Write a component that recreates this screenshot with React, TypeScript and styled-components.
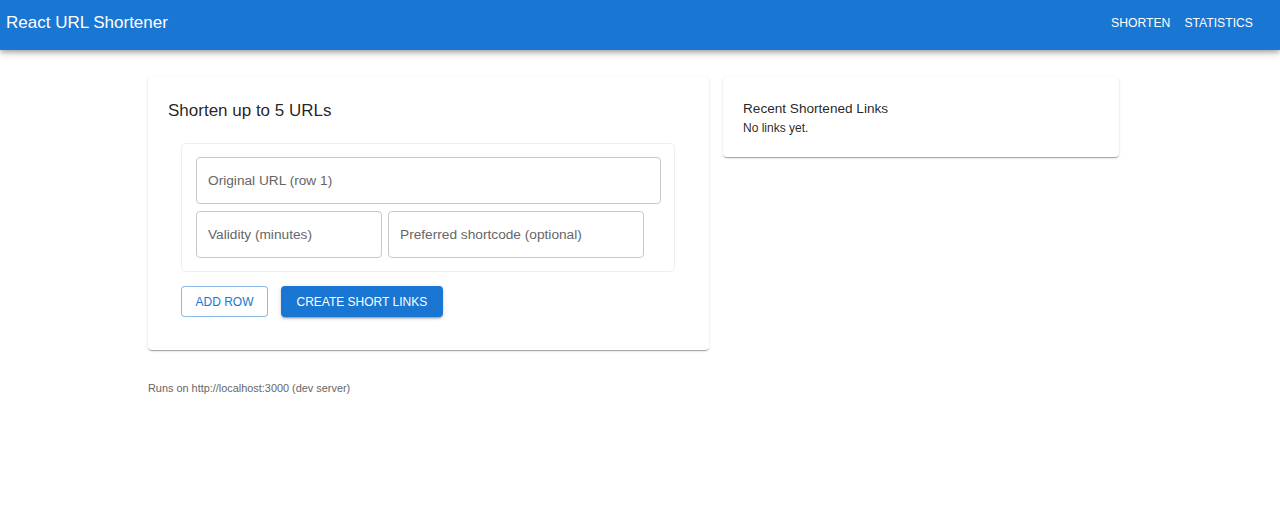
import React from "react";
import styled, { createGlobalStyle } from "styled-components";

const GlobalStyle = createGlobalStyle`
  html, body { margin: 0; padding: 0; background: #fff; }
  body { font-family: "Liberation Sans", Arial, sans-serif; color: rgba(0,0,0,0.87); }
  * { box-sizing: border-box; }
`;

const AppBar = styled.header`
  height: 50px;
  background: #1976d2;
  color: #fff;
  display: flex;
  align-items: center;
  justify-content: space-between;
  padding: 0 27px 0 6px;
  box-shadow: 0px 2px 4px -1px rgba(0,0,0,0.2), 0px 4px 5px 0px rgba(0,0,0,0.14), 0px 1px 10px 0px rgba(0,0,0,0.12);
  position: relative;
  z-index: 1;
`;

const Brand = styled.div`
  font-size: 17px;
  line-height: 20px;
  margin-top: -5px;
`;

const Nav = styled.nav`
  display: flex;
  gap: 14px;
  margin-top: -5px;
`;

const NavLink = styled.a`
  color: #fff;
  font-size: 12.2px;
  font-weight: 500;
  text-transform: uppercase;
  text-decoration: none;
  line-height: 16px;
`;

const Main = styled.main`
  padding: 27px 0 0 148px;
`;

const Columns = styled.div`
  display: grid;
  grid-template-columns: 561px 396px;
  gap: 14px;
  align-items: start;
`;

const Card = styled.section`
  background: #fff;
  border-radius: 4px;
  padding: 20px;
  box-shadow: 0px 2px 1px -1px rgba(0,0,0,0.2), 0px 1px 1px 0px rgba(0,0,0,0.14), 0px 1px 3px 0px rgba(0,0,0,0.12);
`;

const CardTitle = styled.h2`
  margin: 0;
  font-size: 17px;
  font-weight: 400;
  line-height: 28px;
`;

const FormArea = styled.div`
  padding: 18px 14px 13px 13px;
`;

const RowBox = styled.div`
  border: 1px solid #eeeeee;
  border-radius: 4px;
  padding: 13px 13px 13px 14px;
  display: flex;
  flex-direction: column;
  gap: 7px;
`;

const FieldRow = styled.div`
  display: flex;
  gap: 6px;
`;

const Field = styled.input<{ $w: number }>`
  width: ${(p) => p.$w}px;
  height: 47px;
  border: 1px solid #c8c8c8;
  border-radius: 4px;
  padding: 0 11px;
  font-family: "Liberation Sans", Arial, sans-serif;
  font-size: 13.7px;
  color: rgba(0,0,0,0.87);
  background: #fff;
  outline: none;
  &::placeholder { color: #666; opacity: 1; }
`;

const Actions = styled.div`
  display: flex;
  gap: 13px;
  margin-top: 14px;
`;

const Button = styled.button<{ $variant: "outlined" | "contained" }>`
  height: 31px;
  border-radius: 4px;
  font-family: "Liberation Sans", Arial, sans-serif;
  font-size: 12px;
  font-weight: 500;
  text-transform: uppercase;
  cursor: pointer;
  ${(p) =>
    p.$variant === "outlined"
      ? `padding: 0 13.5px; background: #fff; color: #1976d2; border: 1px solid rgba(25,118,210,0.5);`
      : `padding: 0 15.5px; background: #1976d2; color: #fff; border: none; box-shadow: 0px 3px 1px -2px rgba(0,0,0,0.2), 0px 2px 2px 0px rgba(0,0,0,0.14), 0px 1px 5px 0px rgba(0,0,0,0.12);`}
`;

const RecentTitle = styled.h3`
  margin: 0;
  font-size: 13.6px;
  font-weight: 400;
  line-height: 23px;
`;

const Muted = styled.p`
  margin: 0;
  font-size: 12px;
  line-height: 17px;
`;

const Footer = styled.p`
  margin: 31px 0 0;
  font-size: 10.9px;
  line-height: 14px;
  color: #666;
`;

export default function App() {
  return (
    <>
      <GlobalStyle />
      <AppBar>
        <Brand>React URL Shortener</Brand>
        <Nav>
          <NavLink href="#">Shorten</NavLink>
          <NavLink href="#">Statistics</NavLink>
        </Nav>
      </AppBar>
      <Main>
        <Columns>
          <Card>
            <CardTitle>Shorten up to 5 URLs</CardTitle>
            <FormArea>
              <RowBox>
                <FieldRow>
                  <Field $w={465} placeholder="Original URL (row 1)" />
                </FieldRow>
                <FieldRow>
                  <Field $w={186} placeholder="Validity (minutes)" />
                  <Field $w={256} placeholder="Preferred shortcode (optional)" />
                </FieldRow>
              </RowBox>
              <Actions>
                <Button $variant="outlined">Add row</Button>
                <Button $variant="contained">Create short links</Button>
              </Actions>
            </FormArea>
          </Card>
          <Card>
            <RecentTitle>Recent Shortened Links</RecentTitle>
            <Muted>No links yet.</Muted>
          </Card>
        </Columns>
        <Footer>Runs on http://localhost:3000 (dev server)</Footer>
      </Main>
    </>
  );
}
